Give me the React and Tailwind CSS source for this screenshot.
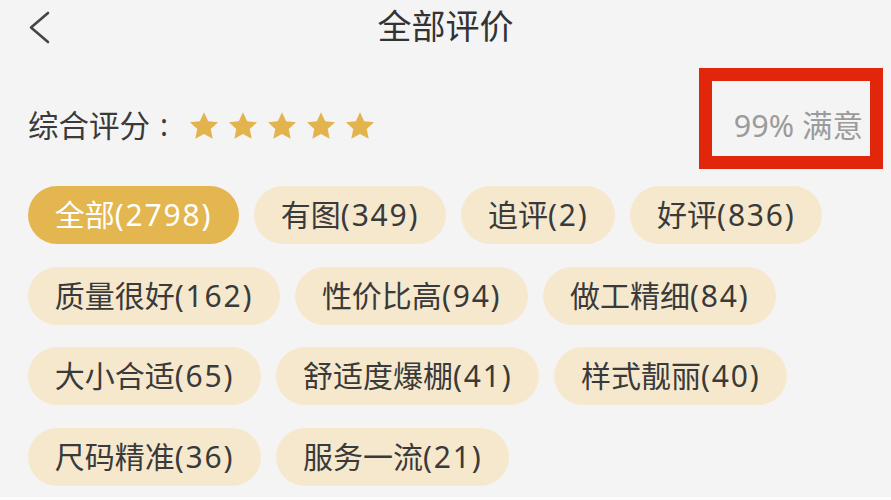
import React from "react";

const tags = [
  { name: "全部", count: "(2798)", active: true },
  { name: "有图", count: "(349)" },
  { name: "追评", count: "(2)" },
  { name: "好评", count: "(836)" },
  { name: "质量很好", count: "(162)" },
  { name: "性价比高", count: "(94)" },
  { name: "做工精细", count: "(84)" },
  { name: "大小合适", count: "(65)" },
  { name: "舒适度爆棚", count: "(41)" },
  { name: "样式靓丽", count: "(40)" },
  { name: "尺码精准", count: "(36)" },
  { name: "服务一流", count: "(21)" },
];

function Star() {
  return (
    <svg width="28" height="27" viewBox="1.8 1.6 20.4 19.4" className="shrink-0">
      <path
        d="M12 1.6l3.05 6.55 7.15.85-5.28 4.92 1.4 7.08L12 17.45 5.68 21l1.4-7.08L1.8 9l7.15-.85z"
        fill="#e3b34d"
      />
    </svg>
  );
}

export default function App() {
  return (
    <div
      className="relative w-[891px] h-[500px] bg-[#f4f4f4] flex flex-col overflow-hidden"
      style={{ fontFamily: '"Noto Sans", "Noto Sans CJK SC", sans-serif' }}
    >
      <div className="flex-1">
        {/* header */}
        <div className="grid grid-cols-[1fr_auto_1fr] items-center h-[54px]">
          <div className="pl-[29px] flex items-center">
            <svg width="22" height="34" viewBox="0 0 22 34">
              <polyline
                points="19,3 2,17.5 19,32"
                fill="none"
                stroke="#454545"
                strokeWidth="2.6"
                strokeLinecap="round"
                strokeLinejoin="round"
              />
            </svg>
          </div>
          <div className="text-[34px] leading-none text-[#333333] pb-[2px]">全部评价</div>
          <div />
        </div>

        {/* rating row */}
        <div className="mt-[41px] h-[60px] flex items-center justify-between pl-[28px] pr-[28px]">
          <div className="flex items-center">
            <span className="text-[30.5px] text-[#3a3a3a] leading-none">综合评分</span>
            <span className="text-[30px] text-[#3a3a3a] leading-none ml-[10px]">:</span>
            <div className="flex items-center gap-[11px] ml-[22px]">
              <Star />
              <Star />
              <Star />
              <Star />
              <Star />
            </div>
          </div>
          <div className="text-[30.5px] text-[#9b9b9b] leading-none">99% 满意</div>
        </div>

        {/* tags */}
        <div className="mt-[31px] px-[28px] flex flex-wrap gap-x-[15px] gap-y-[22.5px]">
          {tags.map((t) => (
            <div
              key={t.name}
              className={
                t.active
                  ? "h-[58px] rounded-full px-[26.8px] flex items-center bg-[#e3b650] text-white text-[30px] leading-none"
                  : "h-[58px] rounded-full px-[26.8px] flex items-center bg-[#f6e8cd] text-[#3a3a3a] text-[30px] leading-none"
              }
            >
              <span>{t.name}</span>
              <span className="tracking-[1.8px]">{t.count}</span>
            </div>
          ))}
        </div>
      </div>
      <div className="h-[3px] bg-[#fcfcfc]" />

      {/* annotation box */}
      <div className="absolute left-[699px] top-[68px] w-[184px] h-[101px] border-[13px] border-[#e1260c]" />
    </div>
  );
}
